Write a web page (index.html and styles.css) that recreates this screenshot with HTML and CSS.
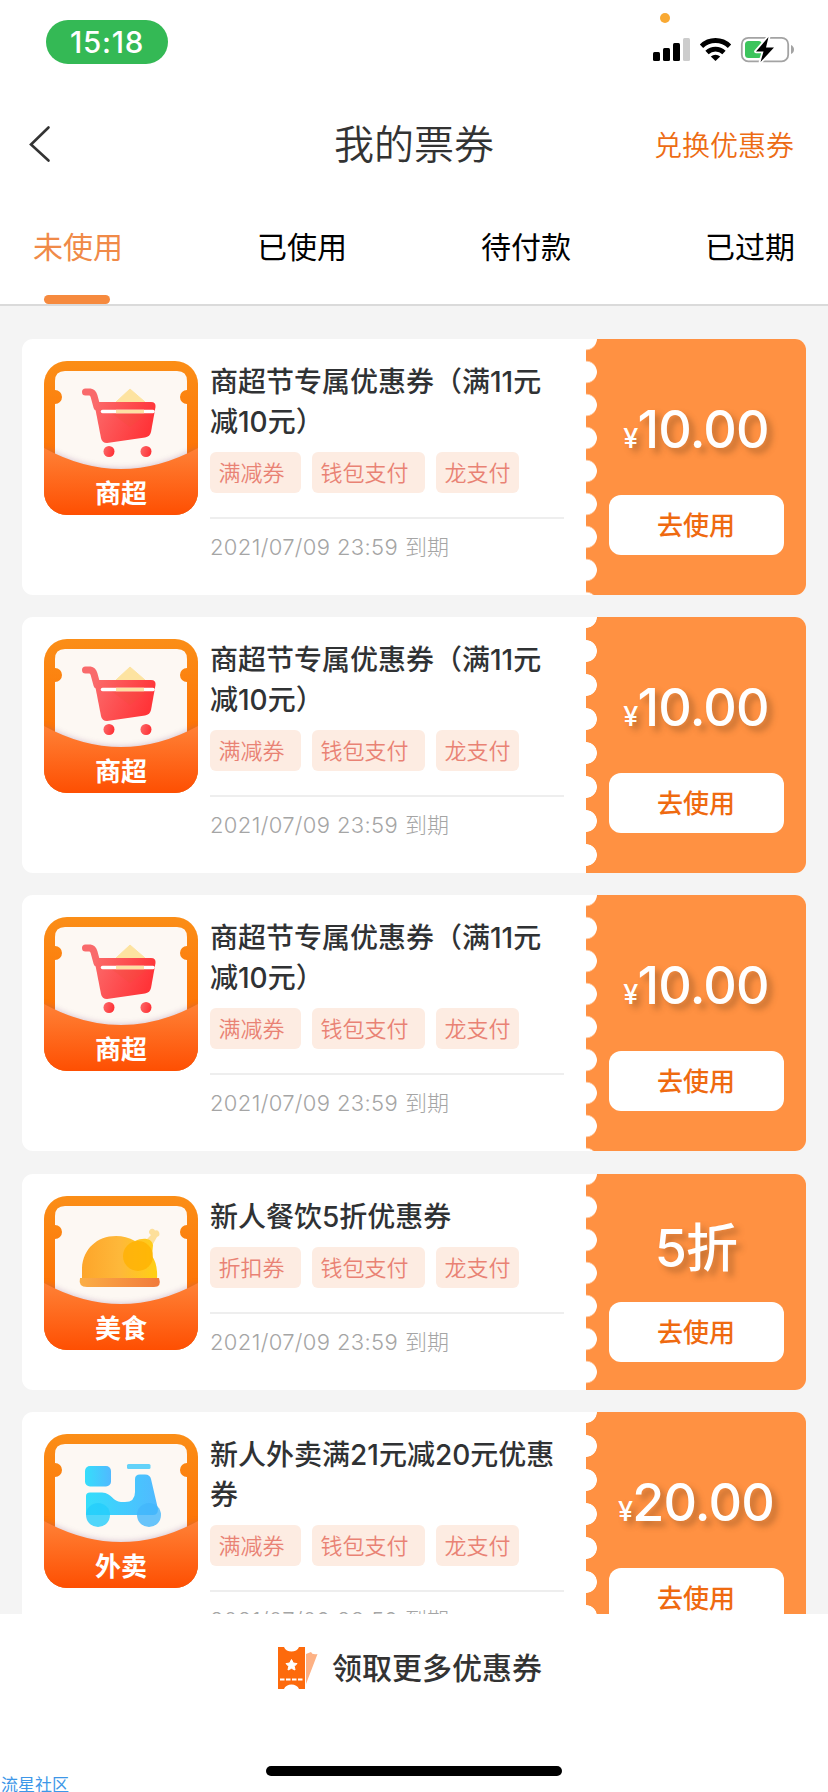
FILE: index.html
```html
<!DOCTYPE html>
<html lang="zh-CN">
<head>
<meta charset="utf-8">
<title>我的票券</title>
<link rel="stylesheet" href="styles.css">
</head>
<body>
<svg class="defs" width="0" height="0" aria-hidden="true">
  <defs>
    <linearGradient id="g-frame" x1="0" y1="0" x2="0" y2="1"><stop offset="0" stop-color="#fb8e17"/><stop offset=".6" stop-color="#fd7306"/></linearGradient>
    <linearGradient id="g-pocket" x1="0" y1="0" x2="0" y2="1"><stop offset="0" stop-color="#ff8136"/><stop offset="1" stop-color="#fe4f02"/></linearGradient>
    <linearGradient id="g-red" x1="0" y1="0" x2="1" y2=".3"><stop offset="0" stop-color="#fb6b6b"/><stop offset="1" stop-color="#ff3438"/></linearGradient>
    <linearGradient id="g-meat" x1="0" y1="0" x2="1" y2="0"><stop offset="0" stop-color="#fda52a"/><stop offset=".5" stop-color="#feb83a"/><stop offset="1" stop-color="#ffcf13"/></linearGradient>
    <linearGradient id="g-plate" x1="0" y1="0" x2="1" y2="0"><stop offset="0" stop-color="#fbae45"/><stop offset="1" stop-color="#f17a3c"/></linearGradient>
    <linearGradient id="g-blue" x1="0" y1="0" x2="1" y2="0"><stop offset="0" stop-color="#35defb"/><stop offset="1" stop-color="#51b9ff"/></linearGradient>
    <clipPath id="c-icon"><rect width="154" height="154" rx="23"/></clipPath>
    <filter id="f-soft" x="-10%" y="-20%" width="120%" height="140%"><feGaussianBlur stdDeviation="3"/></filter>
    <symbol id="ticket-back" viewBox="0 0 154 154">
      <rect width="154" height="154" rx="23" fill="url(#g-frame)"/>
      <path d="M21 10H133Q143 10 143 20V29A7 7 0 0 0 143 43V120H11V43A7 7 0 0 0 11 29V20Q11 10 21 10Z" fill="#fdf8f3"/>
    </symbol>
    <symbol id="ticket-front" viewBox="0 0 154 154">
      <g clip-path="url(#c-icon)">
        <path d="M0 87Q77 129 154 87V154H0Z" fill="#8b5a8c" opacity=".4" filter="url(#f-soft)"/>
        <path d="M0 87Q77 129 154 87V154H0Z" fill="url(#g-pocket)"/>
      </g>
    </symbol>
    <symbol id="cart" viewBox="0 0 154 154">
      <path d="M86 28L101 41H72Z" fill="#fde3a0" stroke="#fde3a0" stroke-linejoin="round"/>
      <path d="M41.500 31L46 31Q49 31.500 50 35L53 46" fill="none" stroke="#f96a6b" stroke-width="7" stroke-linecap="round"/>
      <path d="M50 41H107Q112 41 111.500 46L107 71Q106 75.500 101 76.500L63 82Q58 82 57 77Z" fill="url(#g-red)"/>
      <path d="M66 51H106L86 66Z" fill="#ef5039" opacity=".25"/>
      <path d="M58.500 50.500H109" stroke="#fff" stroke-width="3.500" stroke-linecap="round"/>
      <path d="M72 50.500H100" stroke="#fde0a4" stroke-width="3.500"/>
      <circle cx="65" cy="90.500" r="5.500" fill="url(#g-red)"/><circle cx="102" cy="90.500" r="5.500" fill="url(#g-red)"/>
    </symbol>
    <symbol id="chicken" viewBox="0 0 154 154">
      <path d="M101 45L107 39A3.200 3.200 0 1 1 111 34.500A3.200 3.200 0 1 1 113 41L109 48Z" fill="#fddf9a"/>
      <path d="M38 84V72C39 53 53 40 72 40Q82 40 91 45C99 41 108 42 109 49L108 60Q114 68 113 84Z" fill="url(#g-meat)"/>
      <circle cx="94" cy="60" r="15" fill="#ffb000" opacity=".75"/>
      <path d="M36 82H115Q118 91 110 91H43Q34 91 36 82Z" fill="url(#g-plate)"/>
    </symbol>
    <symbol id="scooter" viewBox="0 0 154 154">
      <rect x="41" y="32" width="26" height="20.500" rx="5" fill="url(#g-blue)"/>
      <rect x="83" y="30" width="23.500" height="5" rx="1.500" fill="#63d2f9"/>
      <path d="M42 62Q42 58.500 46 58.500H58C68 59 69 68 77 68H81Q91 68 91 58V45Q91 40.500 96 40.500H101Q106 40.500 107 45L114 75Q114 81 109 81H42Z" fill="url(#g-blue)"/>
      <circle cx="54" cy="81" r="12" fill="#24cdfb" opacity=".8"/><circle cx="105" cy="81" r="12" fill="#42b7fb" opacity=".8"/>
    </symbol>
  </defs>
</svg>

<div class="screen">
  <div class="status">
    <div class="clock">15:18</div>
    <svg class="status-icons" width="150" height="56" viewBox="645 10 150 56">
      <circle cx="665" cy="18" r="5" fill="#f9a933"/>
      <g fill="#000"><rect x="653" y="52" width="7" height="9" rx="1.500"/><rect x="663" y="48" width="7" height="13" rx="1.500"/><rect x="673" y="43" width="7" height="18" rx="1.500"/></g>
      <rect x="683" y="38" width="7" height="23" rx="1.500" fill="#ccc"/>
      <g fill="none" stroke="#000" stroke-width="4.800"><path d="M701.500 46.200A20 20 0 0 1 729.500 46.200"/><path d="M707 52.400A12.500 12.500 0 0 1 724 52.400"/></g>
      <path d="M715.500 61L710.800 56.500A7 7 0 0 1 720.200 56.500Z" fill="#000"/>
      <rect x="741.800" y="37.800" width="46.400" height="23.500" rx="6.500" fill="none" stroke="#a3a3a3" stroke-width="1.800"/>
      <path d="M791 45Q794 46.500 794 49.500T791 54Z" fill="#a3a3a3"/>
      <rect x="745" y="41" width="17" height="17" rx="3.500" fill="#3cc45c"/>
      <path d="M768.500 37L756 51.500H763.500L760.500 62L774 47.500H766Z" fill="#000" stroke="#fff" stroke-width="3.600" paint-order="stroke" stroke-linejoin="round"/>
    </svg>
  </div>

  <header class="nav">
    <svg class="back" width="24" height="38" viewBox="0 0 24 38"><path d="M20.500 2.500L3 19.500L20.500 35.500" fill="none" stroke="#333" stroke-width="2.600" stroke-linecap="round"/></svg>
    <h1 class="title">我的票券</h1>
    <a class="redeem">兑换优惠券</a>
  </header>

  <nav class="tabs">
    <div class="tab tab-active">未使用</div>
    <div class="tab">已使用</div>
    <div class="tab">待付款</div>
    <div class="tab">已过期</div>
  </nav>

  <main class="list">
    <article class="card">
      <div class="info">
        <div class="icon"><svg width="154" height="154"><use href="#ticket-back"/><use href="#cart"/><use href="#ticket-front"/></svg><span class="icon-label">商超</span></div>
        <div class="detail">
          <h2 class="name">商超节专属优惠券（满11元减10元）</h2>
          <div class="tags"><span class="tag">满减券</span><span class="tag">钱包支付</span><span class="tag">龙支付</span></div>
          <p class="expiry"><span class="stamp">2021/07/09 23:59</span>到期</p>
        </div>
      </div>
      <div class="stub"><div class="price"><span class="yen">¥</span>10.00</div><button class="use">去使用</button></div>
    </article>

    <article class="card">
      <div class="info">
        <div class="icon"><svg width="154" height="154"><use href="#ticket-back"/><use href="#cart"/><use href="#ticket-front"/></svg><span class="icon-label">商超</span></div>
        <div class="detail">
          <h2 class="name">商超节专属优惠券（满11元减10元）</h2>
          <div class="tags"><span class="tag">满减券</span><span class="tag">钱包支付</span><span class="tag">龙支付</span></div>
          <p class="expiry"><span class="stamp">2021/07/09 23:59</span>到期</p>
        </div>
      </div>
      <div class="stub stub-wide"><div class="price"><span class="yen">¥</span>10.00</div><button class="use">去使用</button></div>
    </article>

    <article class="card">
      <div class="info">
        <div class="icon"><svg width="154" height="154"><use href="#ticket-back"/><use href="#cart"/><use href="#ticket-front"/></svg><span class="icon-label">商超</span></div>
        <div class="detail">
          <h2 class="name">商超节专属优惠券（满11元减10元）</h2>
          <div class="tags"><span class="tag">满减券</span><span class="tag">钱包支付</span><span class="tag">龙支付</span></div>
          <p class="expiry"><span class="stamp">2021/07/09 23:59</span>到期</p>
        </div>
      </div>
      <div class="stub"><div class="price"><span class="yen">¥</span>10.00</div><button class="use">去使用</button></div>
    </article>

    <article class="card card-short">
      <div class="info">
        <div class="icon"><svg width="154" height="154"><use href="#ticket-back"/><use href="#chicken"/><use href="#ticket-front"/></svg><span class="icon-label">美食</span></div>
        <div class="detail">
          <h2 class="name">新人餐饮5折优惠券</h2>
          <div class="tags"><span class="tag">折扣券</span><span class="tag">钱包支付</span><span class="tag">龙支付</span></div>
          <p class="expiry"><span class="stamp">2021/07/09 23:59</span>到期</p>
        </div>
      </div>
      <div class="stub"><div class="price">5折</div><button class="use">去使用</button></div>
    </article>

    <article class="card">
      <div class="info">
        <div class="icon"><svg width="154" height="154"><use href="#ticket-back"/><use href="#scooter"/><use href="#ticket-front"/></svg><span class="icon-label">外卖</span></div>
        <div class="detail">
          <h2 class="name">新人外卖满21元减20元优惠券</h2>
          <div class="tags"><span class="tag">满减券</span><span class="tag">钱包支付</span><span class="tag">龙支付</span></div>
          <p class="expiry"><span class="stamp">2021/07/09 23:59</span>到期</p>
        </div>
      </div>
      <div class="stub stub-wide"><div class="price"><span class="yen">¥</span>20.00</div><button class="use">去使用</button></div>
    </article>
  </main>

  <footer class="more">
    <div class="more-link">
      <svg width="42" height="44" viewBox="0 0 42 44">
        <path d="M28 8L33 6Q34 9 39.500 8L28 38Z" fill="#fdb184"/>
        <path d="M0 1H6C8 7 19 7 21 1H27V43H21C19 37 8 37 6 43H0Z" fill="#fd6a0c"/>
        <path d="M13.500 13.500L15.300 17L19 17.600L16.300 20.300L17 24L13.500 22.300L10 24L10.700 20.300L8 17.600L11.700 17Z" fill="#fff" stroke="#fff" stroke-linejoin="round"/>
        <path d="M2 33.500H25" stroke="#fff" stroke-width="2" stroke-dasharray="4.500 1.500"/>
      </svg>
      <span>领取更多优惠券</span>
    </div>
    <div class="home-bar"></div>
    <div class="watermark">流星社区</div>
  </footer>
</div>
</body>
</html>
```

FILE: styles.css
```css
* { box-sizing: border-box; }

body {
  margin: 0;
  background: #fff;
  color: #333;
  font-family: Inter, "Noto Sans CJK SC", sans-serif;
}

h1, h2, p { margin: 0; font-weight: 400; }

.defs { position: absolute; }

.screen {
  display: flex;
  flex-direction: column;
  width: 828px;
  height: 1792px;
  overflow: hidden;
}

.status {
  display: flex;
  flex: none;
  justify-content: space-between;
  height: 88px;
  padding: 10px 33px 0 46px;
}

.clock {
  width: 122px;
  height: 44px;
  margin-top: 10px;
  border-radius: 22px;
  background: #34b955;
  color: #fff;
  font-size: 29.500px;
  font-weight: 450;
  letter-spacing: .8px;
  line-height: 45px;
  text-align: center;
}

.nav {
  display: grid;
  grid-template-columns: 1fr auto 1fr;
  flex: none;
  align-items: center;
  height: 112px;
  padding: 0 34px 0 28px;
}

.title {
  margin: 2px 0 0 6px;
  color: #333;
  font-size: 40px;
  font-weight: 350;
  line-height: 60px;
}

.redeem {
  justify-self: end;
  color: #ed6c14;
  font-size: 28px;
  font-weight: 350;
}

.tabs {
  display: flex;
  flex: none;
  justify-content: space-between;
  height: 106px;
  padding: 0 33px;
  border-bottom: 2px solid #dadada;
  color: #000;
  font-size: 30px;
  line-height: 94px;
}

.tab-active {
  display: flex;
  flex-direction: column;
  justify-content: space-between;
  color: #f08a48;
}

.tab-active::after {
  width: 66px;
  height: 9px;
  margin-left: 11px;
  border-radius: 4.500px;
  background: #f68a3e;
  content: "";
}

.list {
  display: flex;
  flex: none;
  flex-direction: column;
  gap: 22.200px;
  height: 1308px;
  padding: 33px 22px 0;
  overflow: hidden;
  background: #f4f4f4;
}

.card {
  display: flex;
  flex: none;
  height: 256px;
  overflow: hidden;
  border-radius: 11px;
  background: #fff;
}

.card-short { height: 216px; }

.info {
  display: flex;
  flex: none;
  gap: 12px;
  width: 564px;
  padding: 22px 22px 0;
}

.icon {
  display: grid;
  width: 154px;
  height: 154px;
}

.icon svg,
.icon-label { grid-area: 1 / 1; }

.icon-label {
  align-self: end;
  z-index: 1;
  color: #fff;
  font-size: 26px;
  font-weight: 700;
  line-height: 42px;
  text-align: center;
}

.detail { width: 354px; }

.name {
  padding-top: 1px;
  color: #303234;
  font-size: 28px;
  font-weight: 500;
  line-height: 40px;
}

.tags {
  display: flex;
  gap: 11px;
  margin-top: 10px;
  padding-bottom: 24px;
  border-bottom: 2px solid #eee;
}

.tag {
  height: 41px;
  padding: 0 16.500px 0 8.500px;
  border-radius: 6px;
  background: #fdece2;
  color: #e98274;
  font-size: 22px;
  font-weight: 350;
  line-height: 42px;
}

.tag:last-child { padding-right: 8.500px; }

.expiry {
  color: #a5a5a5;
  font-size: 22px;
  font-weight: 300;
  line-height: 56px;
}

.stamp {
  margin-right: 7px;
  letter-spacing: .35px;
}

.stub {
  display: flex;
  flex-direction: column;
  align-items: center;
  width: 220px;
  padding-top: 57px;
  background: radial-gradient(circle at 0 50%, #fff 10.500px, transparent 11.200px) 0 -16.500px / 100% 33px #ff9142;
}

.stub-wide { background-position: 0 -17px; background-size: 100% 34px; }

.card-short .stub { padding-top: 41px; }

.price {
  height: 99px;
  color: #fff;
  font-size: 52px;
  font-weight: 500;
  letter-spacing: -.8px;
  line-height: 68px;
  text-shadow: 5px 5px 6px rgba(120, 70, 30, .45);
  white-space: nowrap;
}

.card-short .price { height: 87px; }

.yen { font-size: 27px; }

.use {
  width: 175px;
  height: 60px;
  padding: 2px 0 0;
  border: 0;
  border-radius: 12px;
  background: #fff;
  color: #ef6a10;
  font-family: inherit;
  font-size: 26px;
  font-weight: 500;
  line-height: 58px;
}

.more {
  position: relative;
  display: flex;
  flex: none;
  flex-direction: column;
  align-items: center;
  justify-content: space-between;
  height: 178px;
  padding: 32px 0 16px;
}

.more-link {
  display: flex;
  gap: 12px;
  margin-right: 8px;
  font-size: 30px;
  font-weight: 500;
  line-height: 44px;
}

.home-bar {
  width: 296px;
  height: 10px;
  border-radius: 5px;
  background: #000;
}

.watermark {
  position: absolute;
  bottom: -3px;
  left: 1px;
  color: #3d97e8;
  font-size: 17px;
  line-height: 20px;
}
```
